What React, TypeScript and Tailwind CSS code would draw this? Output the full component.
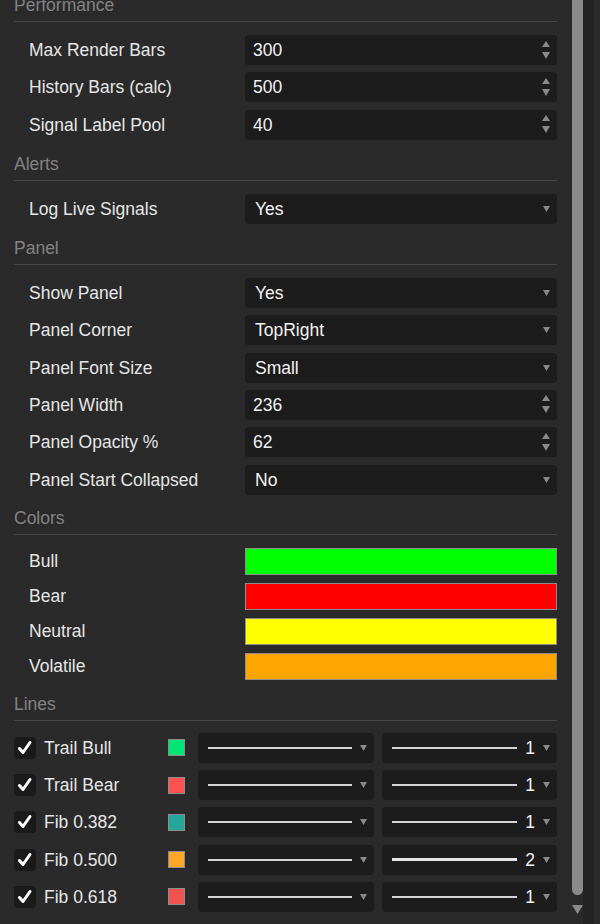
import React from "react";

function SpinArrows() {
  return (
    <svg width="8" height="19" viewBox="0 0 8 19" className="shrink-0">
      <polygon points="4,0 8,6 0,6" fill="#8a8a8a" />
      <polygon points="0,11 8,11 4,18" fill="#8a8a8a" />
    </svg>
  );
}

function DownArrow({ w = 7, h = 6 }: { w?: number; h?: number }) {
  return (
    <svg width={w} height={h} viewBox={`0 0 ${w} ${h}`} className="shrink-0">
      <polygon points={`0,0 ${w},0 ${w / 2},${h}`} fill="#8a8a8a" />
    </svg>
  );
}

function SectionHeader({ title }: { title: string }) {
  return (
    <div className="text-[#838383] leading-[18px] pb-[7px] border-b border-[#474747]">
      {title}
    </div>
  );
}

function Row({ label, children }: { label: string; children: React.ReactNode }) {
  return (
    <div className="grid grid-cols-[231px_1fr] items-center h-[30px]">
      <div className="pl-[15px] text-[#e6e6e6] leading-[18px] whitespace-nowrap">{label}</div>
      {children}
    </div>
  );
}

function NumberInput({ value }: { value: string }) {
  return (
    <div className="h-[30px] rounded-[4px] bg-[#1c1c1c] flex items-center justify-between pl-[8px] pr-[7px] text-[#f2f2f2]">
      <span className="leading-[18px]">{value}</span>
      <SpinArrows />
    </div>
  );
}

function SelectInput({ value }: { value: string }) {
  return (
    <div className="h-[30px] rounded-[4px] bg-[#1c1c1c] flex items-center justify-between pl-[10px] pr-[7px] text-[#f2f2f2]">
      <span className="leading-[18px]">{value}</span>
      <DownArrow />
    </div>
  );
}

function ColorRow({ label, color }: { label: string; color: string }) {
  return (
    <div className="grid grid-cols-[231px_1fr] items-center h-[27px]">
      <div className="pl-[15px] text-[#e6e6e6] leading-[18px]">{label}</div>
      <div className="h-[27px] border border-[#8d8d8d]" style={{ backgroundColor: color }} />
    </div>
  );
}

function Check() {
  return (
    <div className="w-[22px] h-[22px] rounded-[4px] bg-[#1a1a1a] flex items-center justify-center shrink-0">
      <svg width="22" height="22" viewBox="0 0 22 22">
        <polyline
          points="5.5,11.5 9,15.5 16,5.5"
          fill="none"
          stroke="#ffffff"
          strokeWidth="3"
          strokeLinecap="round"
          strokeLinejoin="round"
        />
      </svg>
    </div>
  );
}

function LineRow({ label, color, width }: { label: string; color: string; width: number }) {
  return (
    <div className="flex items-center h-[30px]">
      <Check />
      <div className="ml-[8px] w-[124px] text-[#e6e6e6] leading-[18px] whitespace-nowrap">{label}</div>
      <div className="w-[17px] h-[17px] border border-[#8d8d8d] shrink-0" style={{ backgroundColor: color }} />
      <div className="ml-[13px] flex-1 flex gap-[8px]">
        <div className="flex-1 h-[30px] rounded-[4px] bg-[#1c1c1c] flex items-center pl-[10px] pr-[7px] gap-[8px]">
          <div className="flex-1 h-[2px] bg-[#d4d4d4]" />
          <DownArrow />
        </div>
        <div className="flex-1 h-[30px] rounded-[4px] bg-[#1c1c1c] flex items-center pl-[10px] pr-[7px]">
          <div className={width === 2 ? "flex-1 h-[3px] bg-[#e6e6e6]" : "flex-1 h-[2px] bg-[#d4d4d4]"} />
          <span className="ml-[8px] mr-[8px] text-[#f2f2f2] leading-[18px]">{width}</span>
          <DownArrow />
        </div>
      </div>
    </div>
  );
}

export default function App() {
  return (
    <div className="w-[600px] h-[924px] overflow-hidden bg-[#2a2a2a] flex font-['Liberation_Sans',Arial,sans-serif] text-[17.5px]">
      <div className="w-[557px] shrink-0 pl-[14px] flex flex-col -mt-[4px]">
        <SectionHeader title="Performance" />
        <div className="flex flex-col gap-[7.4px] pt-[13px] pb-[15px]">
          <Row label="Max Render Bars"><NumberInput value="300" /></Row>
          <Row label="History Bars (calc)"><NumberInput value="500" /></Row>
          <Row label="Signal Label Pool"><NumberInput value="40" /></Row>
        </div>

        <SectionHeader title="Alerts" />
        <div className="flex flex-col gap-[7.4px] pt-[13px] pb-[15px]">
          <Row label="Log Live Signals"><SelectInput value="Yes" /></Row>
        </div>

        <SectionHeader title="Panel" />
        <div className="flex flex-col gap-[7.4px] pt-[13px] pb-[14px]">
          <Row label="Show Panel"><SelectInput value="Yes" /></Row>
          <Row label="Panel Corner"><SelectInput value="TopRight" /></Row>
          <Row label="Panel Font Size"><SelectInput value="Small" /></Row>
          <Row label="Panel Width"><NumberInput value="236" /></Row>
          <Row label="Panel Opacity %"><NumberInput value="62" /></Row>
          <Row label="Panel Start Collapsed"><SelectInput value="No" /></Row>
        </div>

        <SectionHeader title="Colors" />
        <div className="flex flex-col gap-[8px] pt-[13px] pb-[15px]">
          <ColorRow label="Bull" color="#00ff00" />
          <ColorRow label="Bear" color="#ff0000" />
          <ColorRow label="Neutral" color="#ffff00" />
          <ColorRow label="Volatile" color="#ffa500" />
        </div>

        <SectionHeader title="Lines" />
        <div className="flex flex-col gap-[7.3px] pt-[12px]">
          <LineRow label="Trail Bull" color="#00e676" width={1} />
          <LineRow label="Trail Bear" color="#ff5252" width={1} />
          <LineRow label="Fib 0.382" color="#26a69a" width={1} />
          <LineRow label="Fib 0.500" color="#ffa726" width={2} />
          <LineRow label="Fib 0.618" color="#ef5350" width={1} />
        </div>
      </div>

      <div className="w-[15px] shrink-0" />
      <div className="w-[11px] shrink-0 flex flex-col items-center">
        <div className="w-[11px] h-[895px] rounded-b-full bg-[#8a8a8a]" />
        <svg width="11" height="9" viewBox="0 0 11 9" className="mt-[10px]">
          <polygon points="0,0 11,0 5.5,9" fill="#8a8a8a" />
        </svg>
      </div>
      <div className="w-[11px] shrink-0 bg-[#232323]" />
      <div className="flex-1" />
    </div>
  );
}
